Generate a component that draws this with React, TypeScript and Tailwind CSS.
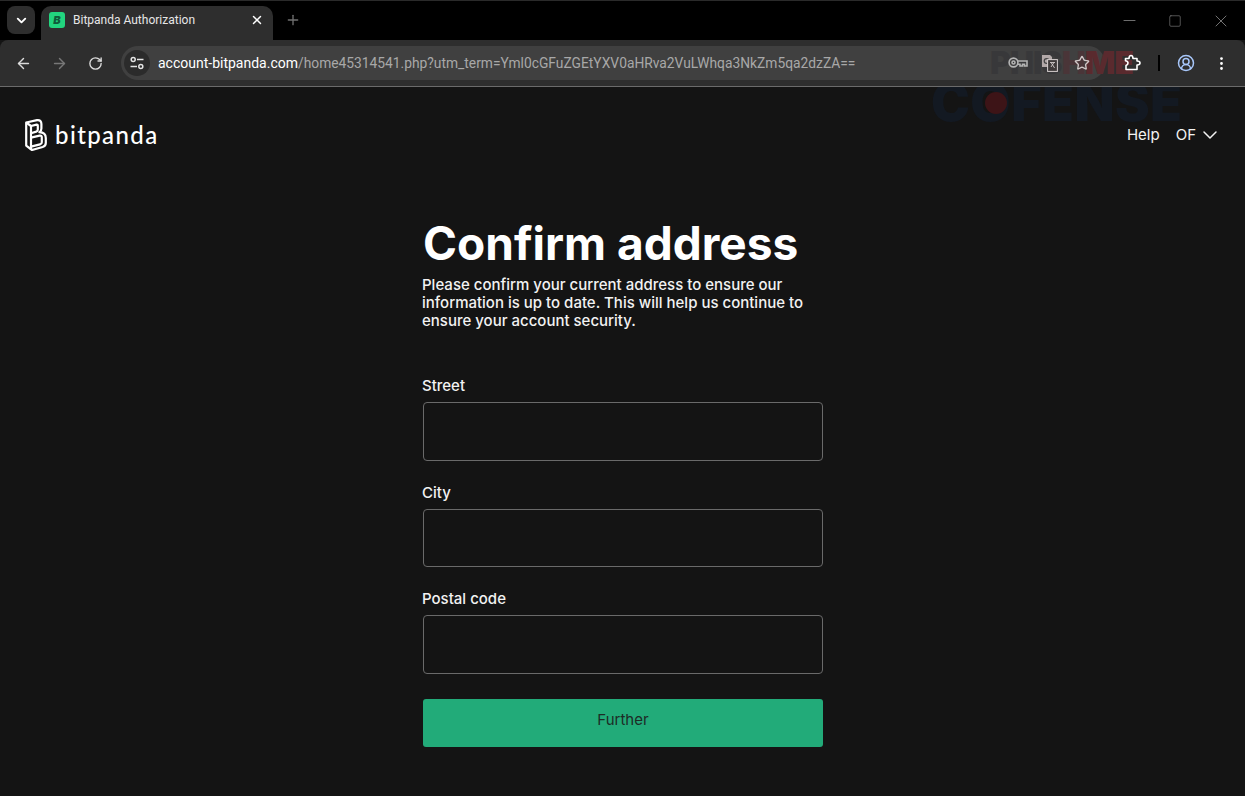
import { ArrowLeft, ArrowRight, ChevronDown, CircleUserRound, EllipsisVertical, Minus, Plus, RotateCw, Square, Star, X } from 'lucide-react';

const fields = [
  { label: 'Street', mt: 'mt-[44px]', h: 'h-[59px]' },
  { label: 'City', mt: 'mt-[20px]', h: 'h-[58px]' },
  { label: 'Postal code', mt: 'mt-[20px]', h: 'h-[59px]' },
];

function BitpandaMark() {
  return (
    <svg width="22" height="32" viewBox="0 0 22 32" fill="none" stroke="white" strokeWidth="2.2" strokeLinejoin="round">
      <path d="M1.2 3.5 L12 1.2 Q16.4 0.6 16.4 5 L16.4 9.5 Q16.4 12 14.4 13.2 Q20.8 13.6 20.8 19 L20.8 24 Q20.8 27 17.6 28 L7 31 L1.2 26.6 Z" />
      <path d="M1.2 3.5 L6 7 L6 31" />
      <path d="M6 7 L11.6 5.6 Q12.8 5.4 12.8 6.8 L12.8 10.4 Q12.8 12 11.2 12.6 L6 14.2" />
      <path d="M6 18.6 L14.6 16.6 Q16.8 16.2 16.8 18.4 L16.8 23.2 Q16.8 25 15 25.4 L6 27.6" />
    </svg>
  );
}

function SiteSettingsIcon() {
  return (
    <svg width="16" height="16" viewBox="0 0 16 16" fill="none" stroke="#e4e4e4" strokeWidth="1.5">
      <circle cx="4.2" cy="4.5" r="2" />
      <path d="M8 4.5 H14.5" />
      <path d="M1.5 11.5 H8" />
      <circle cx="11.8" cy="11.5" r="2" />
    </svg>
  );
}

function KeyIcon() {
  return (
    <svg width="20" height="14" viewBox="0 0 20 14" fill="none" stroke="#b4b4b4" strokeWidth="1.6" className="relative">
      <circle cx="5.5" cy="6.5" r="4.4" />
      <circle cx="5.5" cy="6.5" r="1.5" />
      <path d="M9.8 5 H19 V10 H16.5 V8.2 H14.5 V10 H12 V8.2 H9.8" />
    </svg>
  );
}

function TranslateIcon() {
  return (
    <svg width="16" height="17" viewBox="0 0 16 17" className="relative">
      <path d="M0 0 H8 L10 2 V12 H0 Z" fill="#b2a8a8" />
      <circle cx="4.6" cy="6" r="2.4" fill="none" stroke="#444" strokeWidth="1.2" />
      <rect x="5.6" y="4.6" width="9.8" height="11.8" fill="#3f3a3a" stroke="#d6cfcf" strokeWidth="1" />
      <path d="M8 7.5 H13 M9 7.5 L12.6 13 M12 7.5 L9 12" stroke="#cfc8c8" strokeWidth="0.9" fill="none" />
    </svg>
  );
}

function ExtensionsIcon() {
  return (
    <svg width="18" height="18" viewBox="0 0 18 18" fill="none" stroke="white" strokeWidth="1.6" strokeLinejoin="round" className="relative ml-[18px]">
      <path d="M2.5 4.5 H6 Q6 1.5 8 1.5 Q10 1.5 10 4.5 H14 V7 Q17 7 17 9 Q17 11 14 11 V15.5 H3 V11.5 Q5 10.8 5 9 Q5 7.4 2.5 6.8 Z" />
    </svg>
  );
}

function AddressForm() {
  return (
    <form className="w-[401px] mx-auto pl-px mt-[63px]">
      <h1 className="text-[46px] leading-[58px] font-bold text-white">Confirm address</h1>
      <p className="mt-[4px] -ml-px text-[15px] leading-[18px] font-medium text-[#f2f2f2]">
        Please confirm your current address to ensure our information is up to date. This will help us continue to ensure your account security.
      </p>
      {fields.map((f) => (
        <div key={f.label} className={f.mt}>
          <label className="block -ml-px text-[15px] leading-[24px] font-medium text-[#f2f2f2]">{f.label}</label>
          <div className={`mt-[4px] w-[400px] ${f.h} rounded-[4px] border border-[#6a6a6a] bg-[#141414]`} />
        </div>
      ))}
      <button type="button" className="mt-[25px] block w-[400px] h-[48px] pb-[5px] rounded-[3px] bg-[#22ab79] text-[15px] font-normal text-[#1d2b26]">
        Further
      </button>
    </form>
  );
}

export default function App() {
  return (
    <div className="relative w-[1245px] h-[796px] overflow-hidden bg-[#141414] font-['Inter',sans-serif]">
      {/* watermark */}
      <div className="absolute left-[931px] top-[83px] text-[52px] leading-[39px] font-black tracking-[0.5px] text-[#131922] pointer-events-none select-none">COFENSE</div>
      <div className="absolute left-[985px] top-[92px] w-[22px] h-[22px] rounded-full bg-[#3d1417] pointer-events-none" />
      {/* onglets */}
      <div className="relative h-[40px] bg-black border-t border-[#2a2a2a] flex items-end pl-[7px]">
        <div className="self-start mt-[5px] w-[28px] h-[28px] rounded-[8px] bg-[#2e2e2e] flex items-center justify-center">
          <ChevronDown size={15} strokeWidth={3} className="text-white" />
        </div>
        <div className="ml-[6px] w-[232px] h-[34px] pb-[6px] rounded-t-[10px] bg-[#2e2e2e] flex items-center pl-[8px] pr-[9px]">
          <div className="w-[16px] h-[16px] rounded-[3px] bg-[#22d47e] flex items-center justify-center text-[11px] leading-none font-black italic text-[#0f5b3a]">B</div>
          <span className="ml-[8px] text-[12px] font-['Roboto',sans-serif] text-[#e6e6e6]">Bitpanda Authorization</span>
          <X size={14} strokeWidth={2.5} className="ml-auto text-white" />
        </div>
        <Plus size={16} className="self-start mt-[11px] ml-[12px] text-[#707070]" />
        <div className="ml-auto self-start flex items-center h-[39px] text-[#8a8a8a]">
          <Minus size={19} strokeWidth={1} className="mr-[29px]" />
          <Square size={14} strokeWidth={1} className="mr-[29px]" />
          <X size={20} strokeWidth={1} className="mr-[14px]" />
        </div>
      </div>
      {/* barre d'adresse */}
      <div className="relative h-[47px] rounded-t-[8px] bg-[#2e2e2e] border-b border-[#6b6b6b] flex items-center pl-[15px] pr-[15px]">
        <div className="absolute left-[990px] top-[6px] text-[32px] leading-[34px] font-black tracking-[-1px] pointer-events-none select-none">
          <span className="text-[#38383a]">PHIS</span>
          <span className="text-[#4a3538]">H</span>
          <span className="text-[#5a2a2e]">ME</span>
        </div>
        <ArrowLeft size={17} className="text-[#dcdcdc]" />
        <ArrowRight size={17} className="ml-[19px] text-[#777]" />
        <RotateCw size={15} strokeWidth={2.2} className="ml-[20px] text-[#dcdcdc]" />
        <div className="ml-[18px] w-[984px] h-[34px] rounded-full bg-[#404040] flex items-center pl-[3px] pr-[15px]">
          <div className="w-[26px] h-[26px] rounded-full bg-[#2b2b2b] flex items-center justify-center">
            <SiteSettingsIcon />
          </div>
          <span className="ml-[8px] text-[14px] font-['Roboto',sans-serif] text-white">account-bitpanda.com</span>
          <span className="text-[13.8px] font-['Roboto',sans-serif] text-[#a8a8a8]">/home45314541.php?utm_term=Yml0cGFuZGEtYXV0aHRva2VuLWhqa3NkZm5qa2dzZA==</span>
          <div className="ml-auto mr-[14px] relative"><KeyIcon /></div>
          <div className="mr-[16px] flex"><TranslateIcon /></div>
          <Star size={16} className="relative text-[#d0c8c8]" />
        </div>
        <ExtensionsIcon />
        <div className="relative ml-[17px] w-[2px] h-[16px] bg-black" />
        <CircleUserRound size={18} className="relative ml-[17px] text-[#a8c7fa]" />
        <EllipsisVertical size={17} className="relative ml-[18px] text-white" />
      </div>
      {/* header */}
      <header className="flex items-start justify-between pl-[25px] pr-[23px] pt-[32px]">
        <div className="flex items-center gap-[8px]">
          <BitpandaMark />
          <span className="text-[24px] leading-[32px] font-['Lato',sans-serif] font-medium tracking-[1.4px] text-white">bitpanda</span>
        </div>
        <div className="flex items-center mt-[4px] text-[15px] leading-[24px] text-[#f2f2f2]">
          <span>Help</span>
          <span className="ml-[16px]">OF</span>
          <ChevronDown size={24} strokeWidth={1.5} className="ml-[2px]" />
        </div>
      </header>
      <AddressForm />
    </div>
  );
}
